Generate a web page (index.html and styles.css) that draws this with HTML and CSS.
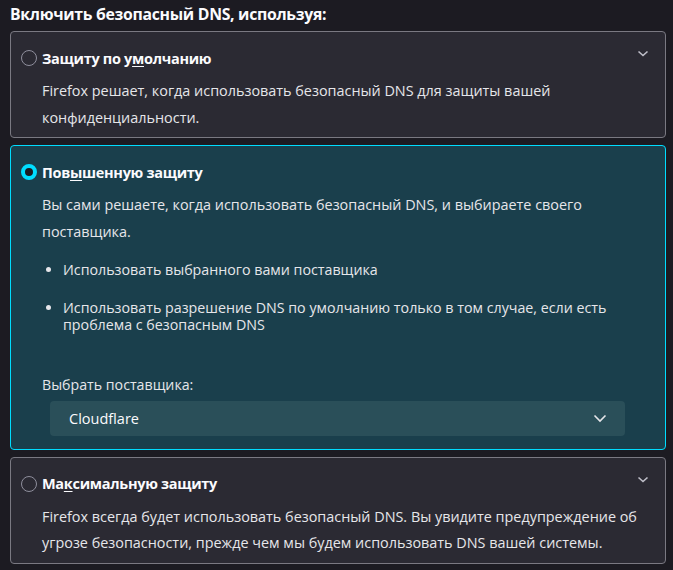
FILE: index.html
```html
<!DOCTYPE html>
<html lang="ru">
<head>
<meta charset="utf-8">
<link rel="stylesheet" href="styles.css">
</head>
<body>
<h1 class="heading">Включить безопасный DNS, используя:</h1>

<section class="card">
  <div class="card-head">
    <span class="radio"></span>
    <span class="title">Защиту по у<u>м</u>олчанию</span>
    <svg class="chev" width="12" height="8" viewBox="0 0 12 8"><path d="M1.5 1.5 L6 5.5 L10.5 1.5" fill="none" stroke="currentColor" stroke-width="1.6"/></svg>
  </div>
  <p class="desc">Firefox решает, когда использовать безопасный DNS для защиты вашей конфиденциальности.</p>
</section>

<section class="card card-selected">
  <div class="card-head">
    <span class="radio radio-on"></span>
    <span class="title">Пов<u>ы</u>шенную защиту</span>
  </div>
  <p class="desc">Вы сами решаете, когда использовать безопасный DNS, и выбираете своего поставщика.</p>
  <ul class="bullets">
    <li>Использовать выбранного вами поставщика</li>
    <li>Использовать разрешение DNS по умолчанию только в том случае, если есть проблема с безопасным DNS</li>
  </ul>
  <div class="label">Выбрать поставщика:</div>
  <div class="select">
    <span>Cloudflare</span>
    <svg class="select-chev" width="14" height="9" viewBox="0 0 14 9"><path d="M1.5 1.5 L7 7 L12.5 1.5" fill="none" stroke="currentColor" stroke-width="1.6"/></svg>
  </div>
</section>

<section class="card">
  <div class="card-head">
    <span class="radio"></span>
    <span class="title">Ма<u>к</u>симальную защиту</span>
    <svg class="chev" width="12" height="8" viewBox="0 0 12 8"><path d="M1.5 1.5 L6 5.5 L10.5 1.5" fill="none" stroke="currentColor" stroke-width="1.6"/></svg>
  </div>
  <p class="desc">Firefox всегда будет использовать безопасный DNS. Вы увидите предупреждение об угрозе безопасности, прежде чем мы будем использовать DNS вашей системы.</p>
</section>
</body>
</html>
```

FILE: styles.css
```css
html, body {
  margin: 0;
  background: #1c1b22;
}
body {
  padding: 0 7px 0 10px;
  font-family: "Open Sans", "Noto Sans", sans-serif;
  font-size: 14.4px;
  color: #fbfbfe;
}
.heading {
  margin: 0;
  padding-top: 2px;
  height: 29px;
  font-size: 15.8px;
  font-weight: 700;
  letter-spacing: -0.3px;
  line-height: 24px;
}
.card {
  background: #2b2a33;
  border: 1px solid #7a7982;
  border-radius: 4px;
  padding: 14px 10px 6px 10px;
  margin-bottom: 7px;
}
.card-selected {
  background: #1a3f4c;
  border-color: #00ddff;
  padding-bottom: 13px;
}
.card-head {
  display: flex;
  align-items: center;
  gap: 5px;
  height: 24px;
}
.radio {
  width: 14px;
  height: 14px;
  border: 1px solid #8f8f9d;
  border-radius: 50%;
  background: #2b2a33;
  flex: none;
}
.radio-on {
  width: 8px;
  height: 8px;
  border: 4px solid #00ddff;
  background: #1c1b22;
}
.title {
  font-weight: 700;
  font-size: 14.5px;
  letter-spacing: -0.3px;
  flex: 1;
}
.title u {
  text-underline-offset: 2px;
}
.chev {
  color: #bfbfc9;
  margin-right: 6px;
  margin-top: -8px;
}
.desc {
  margin: 8px 0 0 0;
  padding-left: 21px;
  line-height: 26.5px;
  color: #e6e6ea;
}
.bullets {
  margin: 16px 0 0 0;
  padding: 0 30px 0 42px;
  color: #e6e6ea;
  font-size: 14.25px;
  line-height: 17.5px;
}
.bullets li {
  margin-bottom: 20px;
}
.bullets li:last-child {
  margin-bottom: 0;
}
.label {
  margin-top: 42px;
  padding-left: 21px;
  line-height: 18px;
  font-size: 14.2px;
  color: #e6e6ea;
}
.select {
  margin: 7px 30px 0 29px;
  height: 35px;
  border-radius: 4px;
  background: #2a4f59;
  display: flex;
  align-items: center;
  justify-content: space-between;
  padding: 0 18px 0 19px;
  font-size: 14.5px;
  color: #fbfbfe;
}
.select-chev {
  color: #e6e6ea;
}
```
